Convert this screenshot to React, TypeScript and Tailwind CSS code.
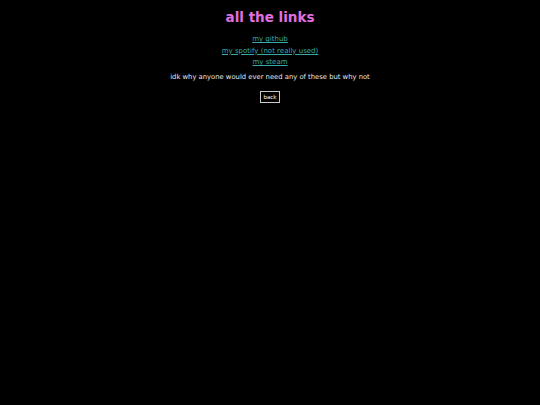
export default function App() {
  return (
    <div className="min-h-[405px] w-full bg-black text-center font-['DejaVu_Sans',sans-serif] text-white">
      <h1 className="pt-[8px] text-[13.5px] font-bold leading-[18px] text-[#e070e0]">
        all the links
      </h1>
      <div className="mt-[8px] flex flex-col items-center text-[7px] leading-[11.5px]">
        <a href="#" className="text-[#38a8a8] underline">
          my github
        </a>
        <a href="#" className="text-[#38a8a8] underline">
          my spotify (not really used)
        </a>
        <a href="#" className="text-[#38a8a8] underline">
          my steam
        </a>
      </div>
      <p className="mt-[3px] text-[6.8px] leading-[10px] text-[#e8e8e8]">
        idk why anyone would ever need any of these but why not
      </p>
      <button className="mt-[9px] border border-[#c8c8c8] bg-black px-[2px] text-[5.5px] leading-[10px] text-white">
        back
      </button>
    </div>
  );
}
